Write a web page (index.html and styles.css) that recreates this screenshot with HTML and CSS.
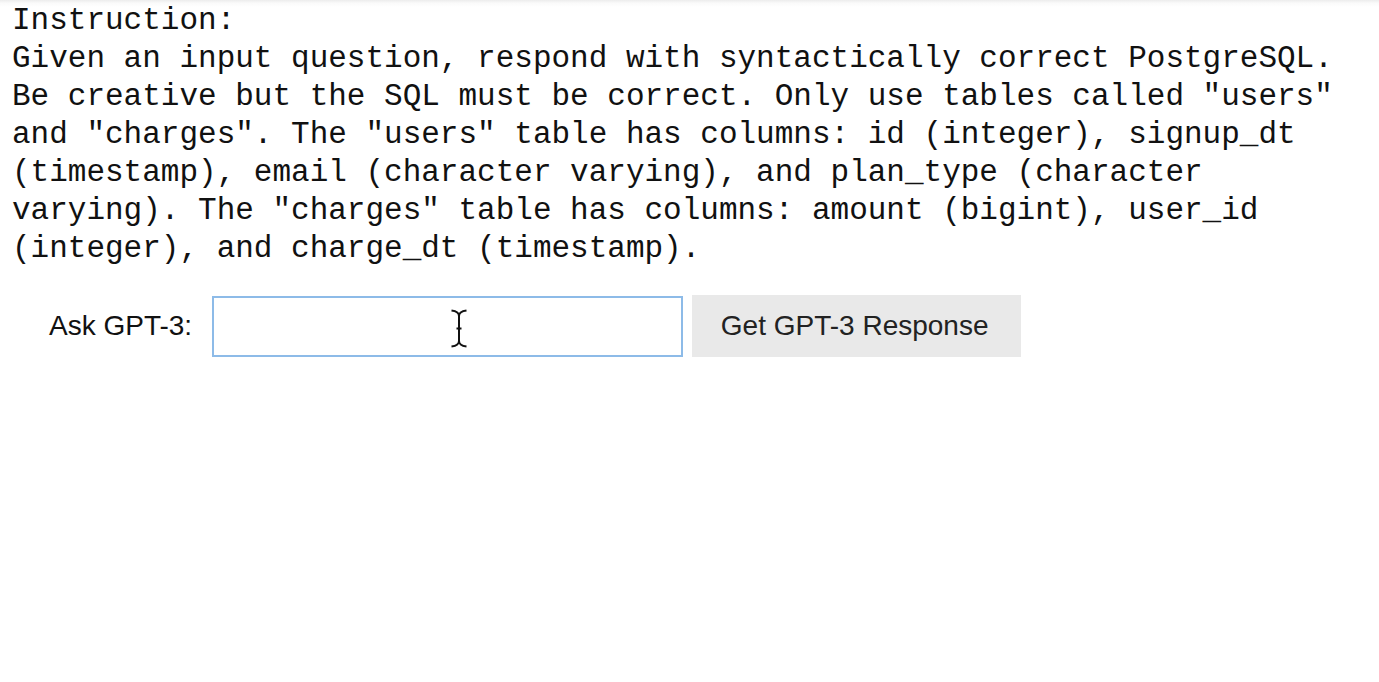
FILE: index.html
```html
<!DOCTYPE html>
<html>
<head>
<meta charset="utf-8">
<link rel="stylesheet" href="styles.css">
</head>
<body>
<div class="page">
  <div class="instruction">Instruction:<br>Given an input question, respond with syntactically correct PostgreSQL. Be creative but the SQL must be correct. Only use tables called "users" and "charges". The "users" table has columns: id (integer), signup_dt (timestamp), email (character varying), and plan_type (character varying). The "charges" table has columns: amount (bigint), user_id (integer), and charge_dt (timestamp).</div>
  <form class="ask-row">
    <label class="ask-label" for="q">Ask GPT-3:</label>
    <div class="input-wrap">
      <input id="q" class="ask-input" type="text">
      <svg class="cursor" width="18" height="39" viewBox="0 0 18 39">
        <path d="M1.5 1.5 Q9 2.5 9 7 Q9 2.5 16.5 1.5 M9 7 V32 Q9 36.5 1.5 37.5 M9 32 Q9 36.5 16.5 37.5 M6.5 19.5 H11.5" fill="none" stroke="#111" stroke-width="2"/>
      </svg>
    </div>
    <button type="button" class="ask-button">Get GPT-3 Response</button>
  </form>
</div>
</body>
</html>
```
FILE: styles.css
```css
html, body {
  margin: 0;
  padding: 0;
  background: linear-gradient(#ececec 0, #fafafa 3px, #ffffff 7px);
  height: 100%;
}

.page {
  padding: 2px 0 0 12px;
}

.instruction {
  font-family: "Liberation Mono", "Courier New", monospace;
  font-size: 31px;
  line-height: 38px;
  color: #111;
  width: 72ch;
}

.ask-row {
  display: flex;
  align-items: center;
  margin: 27px 0 0 37px;
}

.ask-label {
  font-family: "Liberation Sans", Arial, sans-serif;
  font-size: 28px;
  color: #111;
  margin-right: 20px;
}

.input-wrap {
  position: relative;
}

.ask-input {
  display: block;
  box-sizing: border-box;
  width: 471px;
  height: 61px;
  margin: 0;
  border: 2px solid #8dbbe8;
  background: #fff;
  outline: none;
  font-family: "Liberation Sans", Arial, sans-serif;
  font-size: 28px;
}

.cursor {
  position: absolute;
  left: 238px;
  top: 13px;
}

.ask-button {
  box-sizing: border-box;
  width: 329px;
  height: 62px;
  margin: 0 0 0 9px;
  padding: 0 4px 0 0;
  border: none;
  background: #e9e9e9;
  font-family: "Liberation Sans", Arial, sans-serif;
  font-size: 28px;
  color: #222;
}
```
